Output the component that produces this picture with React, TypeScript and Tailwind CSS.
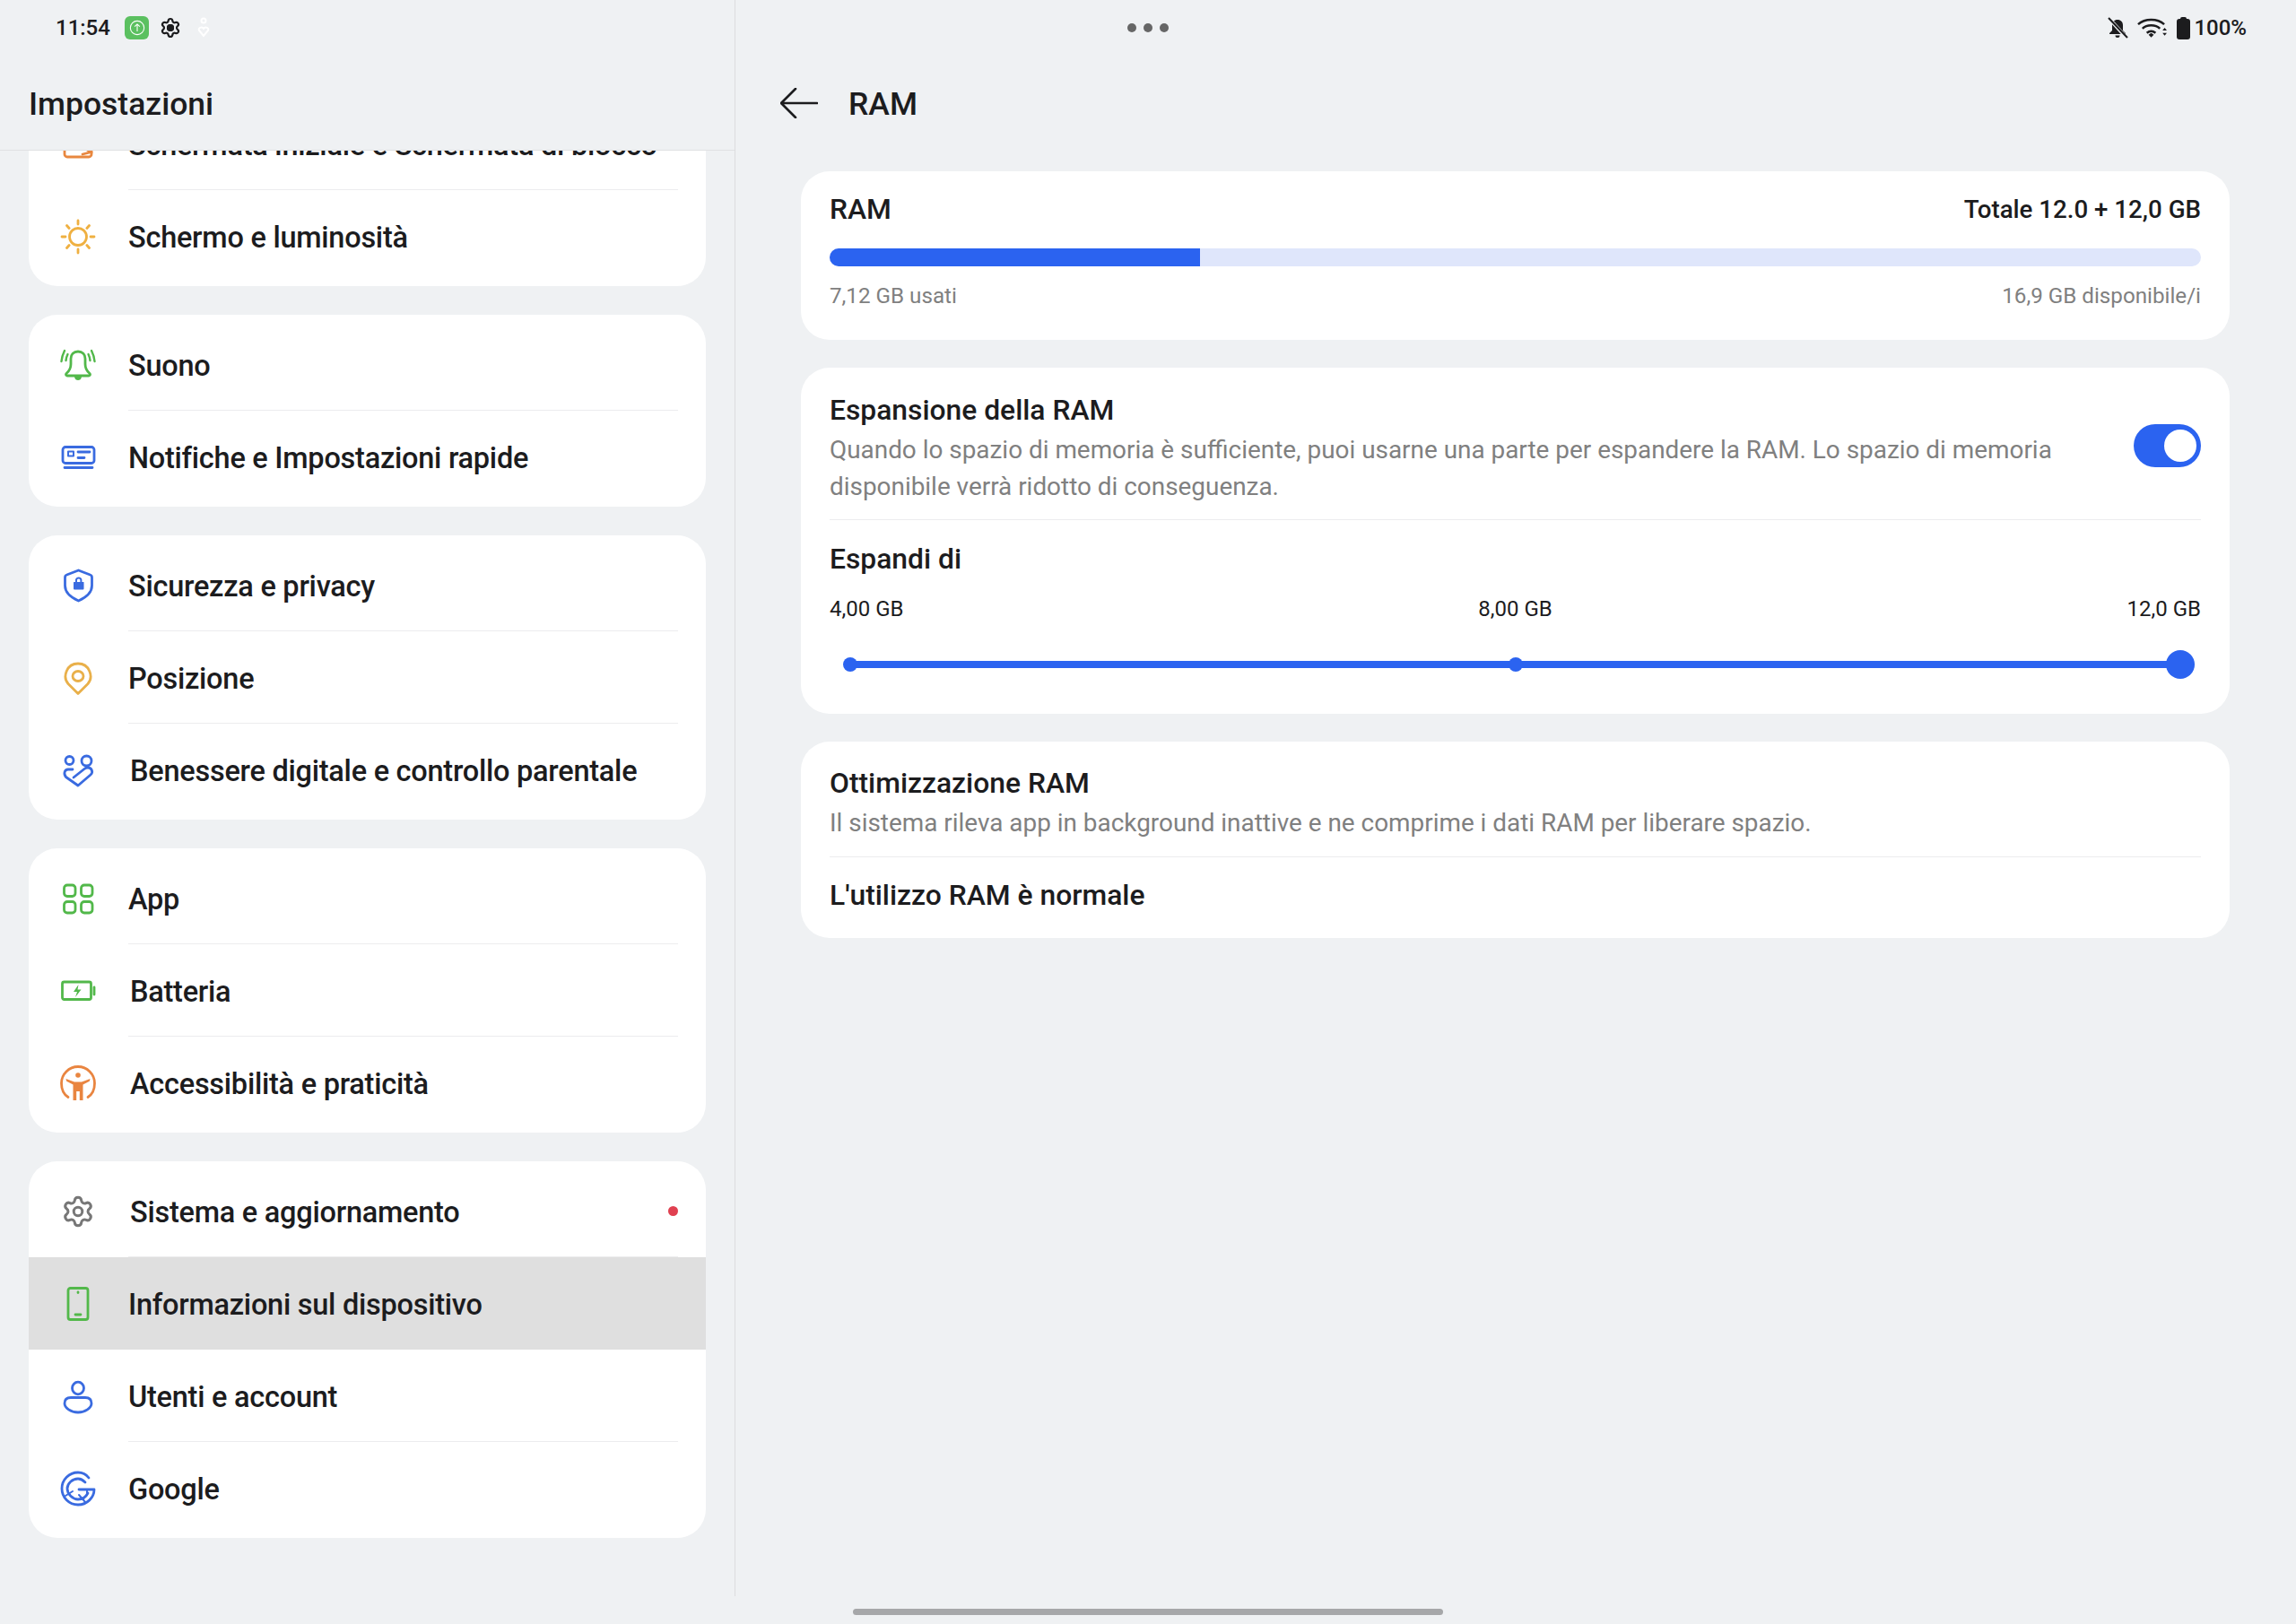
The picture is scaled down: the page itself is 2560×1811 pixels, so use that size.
import React from "react";
import { Settings } from "lucide-react";

const Icon = ({ children, className }: { children: React.ReactNode; className: string }) => (
  <svg viewBox="0 0 40 40" fill="none" stroke="currentColor" strokeWidth="2.8" strokeLinecap="round" strokeLinejoin="round" className={`h-10 w-10 ${className}`}>
    {children}
  </svg>
);

const ScreenIcon = () => (
  <Icon className="text-[#e8873f]">
    <rect x="5" y="6" width="30" height="28" rx="3" />
    <path d="M27 24l8 5M25 31l8-2" />
  </Icon>
);

const SunIcon = () => (
  <Icon className="text-[#efb041]">
    <circle cx="20" cy="20" r="9.500" />
    <path d="M20 2v4M20 34v4M2 20h4M34 20h4M7.500 7.500l2.600 3M32.500 7.500l-2.600 3M7.500 32.500l2.600-3M32.500 32.500l-2.600-3" />
  </Icon>
);

const BellIcon = () => (
  <Icon className="text-[#52b84a]">
    <path d="M20 5c-5 0-8 3.500-8 8v6c0 5-2 8-5 10.500-1 1-.5 2.500 1 2.500h24c1.500 0 2-1.500 1-2.500-3-2.500-5-5.500-5-10.500v-6c0-4.500-3-8-8-8z" />
    <path d="M16 33c.5 3 2 4 4 4s3.500-1 4-4z" fill="currentColor" stroke="none" />
    <path d="M1.500 16c.3-4 1.500-8 3.500-12M6.500 15c.3-2.500 1-5 2-7M38.500 16c-.3-4-1.500-8-3.500-12M33.500 15c-.3-2.500-1-5-2-7" strokeWidth="2.400" />
  </Icon>
);

const NoticeIcon = () => (
  <Icon className="text-[#3a6be0]">
    <rect x="3" y="8.500" width="35" height="18" rx="3" />
    <rect x="9" y="13.500" width="6" height="5" strokeWidth="2" />
    <path d="M20 14h13M20 20.500h7M5 31.500h31" />
  </Icon>
);

const ShieldIcon = () => (
  <Icon className="text-[#3a6be0]">
    <path d="M20.500 3l13 5c1.500.5 2 1.500 2 3v9c0 8-6 13-15 17C11.500 33 5.500 28 5.500 20v-9c0-1.500.5-2.500 2-3z" />
    <path d="M15.500 16h10.500a.5.5 0 01.5.5v7a1 1 0 01-1 1H16a1 1 0 01-1-1v-7a.5.5 0 01.5-.5z" fill="currentColor" stroke="none" />
    <path d="M18 16v-2.500a2.800 2.800 0 015.400 0V16" strokeWidth="2" />
  </Icon>
);

const PinIcon = () => (
  <Icon className="text-[#e9b04a]">
    <path d="M20 37.500L9 26.500C2.500 19 7 4 20 4s17.500 15 11 22.500z" />
    <ellipse cx="20" cy="18" rx="6" ry="5.500" />
  </Icon>
);

const WellbeingIcon = () => (
  <Icon className="text-[#3a6be0]">
    <circle cx="10.500" cy="9" r="4.500" />
    <circle cx="29.500" cy="9.500" r="5.500" />
    <path d="M14 19H9c-4 0-5.500 5-2.500 8.500L20 37l14-12c3.500-3 1-8-3-8-1.500 0-3 .5-4 1.500L15 28" />
  </Icon>
);

const AppsIcon = () => (
  <Icon className="text-[#52b84a]">
    <rect x="4.500" y="5" width="12.500" height="12.500" rx="3.500" />
    <rect x="23.500" y="5" width="12.500" height="12.500" rx="3.500" />
    <rect x="4.500" y="23.500" width="12.500" height="12.500" rx="3.500" />
    <rect x="23.500" y="23.500" width="12.500" height="12.500" rx="3.500" />
  </Icon>
);

const BatteryIcon = () => (
  <Icon className="text-[#52b84a]">
    <rect x="2.500" y="10" width="32" height="19.500" rx="2" />
    <path d="M38 16v8" />
    <path d="M20.500 13l-5.500 8h4l-2 6 6.500-8.500h-4z" fill="currentColor" stroke="none" />
  </Icon>
);

const AccessIcon = () => (
  <Icon className="text-[#e98540]">
    <path d="M9 35.500C3.500 32 1.500 26 1.500 20 1.500 9.800 9.800 1.500 20 1.500S38.500 9.800 38.500 20c0 6-2 12-7.500 15.500" />
    <circle cx="20" cy="11" r="2.800" fill="currentColor" stroke="none" />
    <path d="M6.500 15l9.500 3.500h8l9.500-3.500-.7 2.800-7.300 3.700V39h-3.700V29h-3.600v10H14.500V21.500L7.200 17.800z" fill="currentColor" stroke="none" />
  </Icon>
);

const PhoneIcon = () => (
  <Icon className="text-[#52b84a]">
    <rect x="9" y="2.500" width="22" height="35" rx="2.500" />
    <path d="M17 32h6M20 7v.5" />
  </Icon>
);

const UserIcon = () => (
  <Icon className="text-[#3a6be0]">
    <ellipse cx="20" cy="11" rx="6.500" ry="6.800" />
    <path d="M12 21.500h16c4.500 0 7 2.500 7 6.500 0 5-7 10-15 10S5 33 5 28c0-4 2.500-6.500 7-6.500z" />
  </Icon>
);

const GoogleIcon = () => (
  <Icon className="text-[#3a6be0]">
    <path d="M32 8C29 4 25 2 20 2 10 2 2 10 2 20s8 18 18 18 18-8 18-17H21" />
    <path d="M28 13c-2-2-5-4-8-4C14 9 8 14 8 20c0 6 6 12 12 12 5 0 9-3 11-7" />
    <path d="M6 28l8-5M21 27l7 8M30 21v5" strokeWidth="2" />
  </Icon>
);

type RowData = { icon: React.ReactNode; label: string; shift?: boolean; active?: boolean; dot?: boolean; last?: boolean };

const Row = ({ icon, label, shift, active, dot, last }: RowData) => (
  <div className={`flex h-[103px] pl-[35px] pr-[31px] ${active ? "bg-[#dfdfdf]" : ""}`}>
    <div className="flex w-[76px] shrink-0 items-center">{icon}</div>
    <div className={`flex flex-1 items-center justify-between ${last || active ? "" : "border-b border-[#ececee]"}`}>
      <span className={`block pt-[3px] text-[32.500px] font-[480] leading-10 tracking-[-0.25px] text-[#1c1c1e] ${shift ? "ml-[2px]" : ""}`}>{label}</span>
      {dot && <span className="h-[11px] w-[11px] rounded-full bg-[#e04050]" />}
    </div>
  </div>
);

const Group = ({ rows }: { rows: RowData[] }) => (
  <div className="overflow-hidden rounded-[32px] bg-white py-1">
    {rows.map((r, i) => (
      <Row key={r.label} {...r} last={i === rows.length - 1} />
    ))}
  </div>
);

const groups: RowData[][] = [
  [
    { icon: <BellIcon />, label: "Suono" },
    { icon: <NoticeIcon />, label: "Notifiche e Impostazioni rapide" },
  ],
  [
    { icon: <ShieldIcon />, label: "Sicurezza e privacy" },
    { icon: <PinIcon />, label: "Posizione" },
    { icon: <WellbeingIcon />, label: "Benessere digitale e controllo parentale", shift: true },
  ],
  [
    { icon: <AppsIcon />, label: "App" },
    { icon: <BatteryIcon />, label: "Batteria", shift: true },
    { icon: <AccessIcon />, label: "Accessibilità e praticità", shift: true },
  ],
  [
    { icon: <Settings size={38} strokeWidth={1.9} className="ml-px text-[#777]" />, label: "Sistema e aggiornamento", shift: true, dot: true },
    { icon: <PhoneIcon />, label: "Informazioni sul dispositivo", active: true },
    { icon: <UserIcon />, label: "Utenti e account" },
    { icon: <GoogleIcon />, label: "Google" },
  ],
];

const StatusLeft = () => (
  <div className="flex h-[62px] items-center pl-[62px]">
    <span className="w-[77px] text-[24px] font-medium text-[#1c1c1e]">11:54</span>
    <div className="flex h-[26px] w-[27px] items-center justify-center rounded-[6px] bg-[#5bc060]">
      <svg viewBox="0 0 20 20" fill="none" stroke="#fff" strokeWidth="1.2" className="h-[18px] w-[18px]">
        <circle cx="10" cy="10" r="8.500" />
        <path d="M10 14.500v-9M6.800 8.500L10 5.500l3.200 3" />
      </svg>
    </div>
    <div className="relative ml-3 flex h-[24px] w-[24px] items-center justify-center">
      <Settings size={24} strokeWidth={2.2} className="text-[#1c1c1e]" />
      <span className="absolute h-2 w-2 rounded-full bg-[#1c1c1e]" />
    </div>
    <svg viewBox="0 0 14 24" fill="none" stroke="#fff" strokeWidth="2" className="ml-[18px] h-[24px] w-[14px]">
      <circle cx="7" cy="4" r="2.500" />
      <path d="M7 21L2 15c-1.500-2.500 3-5 5-2 2-3 6.500-.5 5 2z" />
    </svg>
  </div>
);

const StatusRight = () => (
  <div className="relative flex h-[62px] items-center justify-end pr-[55px]">
    <div className="absolute left-[437px] flex gap-2">
      <span className="h-[10px] w-[10px] rounded-full bg-[#666]" />
      <span className="h-[10px] w-[10px] rounded-full bg-[#666]" />
      <span className="h-[10px] w-[10px] rounded-full bg-[#666]" />
    </div>
    <svg viewBox="0 0 24 24" className="h-[24px] w-[24px] text-[#1c1c1e]" fill="currentColor">
      <path d="M12 3c-3.500 0-6 2.500-6 6v6l-3 3v1h18v-1l-3-3V9c0-3.500-2.500-6-6-6zM9.500 20.500h5a2.500 2.500 0 01-5 0z" />
      <path d="M2 1l20 22" stroke="#eff1f3" strokeWidth="4" />
      <path d="M2 1l21 22" stroke="currentColor" strokeWidth="2" />
    </svg>
    <svg viewBox="0 0 34 24" fill="none" stroke="#1c1c1e" strokeWidth="2.600" className="ml-[10px] h-[24px] w-[33px]">
      <path d="M1 8c8-7 22-7 30 0M6 13c5-5 15-5 20 0M11 18c3-2.500 7-2.500 10 0" />
      <path d="M13 20l3-2 3 2-3 3z" fill="#1c1c1e" stroke="none" />
      <path d="M29 15l2.500-3 2.500 3zM29 18l2.500 3 2.500-3z" fill="#1c1c1e" stroke="none" />
    </svg>
    <div className="ml-[11px] flex flex-col items-center">
      <span className="h-[2px] w-[7px] rounded-t-sm bg-[#1c1c1e]" />
      <span className="h-[23px] w-[15px] rounded-[3px] bg-[#1c1c1e]" />
    </div>
    <span className="ml-[4px] text-[24px] font-medium text-[#1c1c1e]">100%</span>
  </div>
);

export default function App() {
  return (
    <div className="relative flex h-[1811px] w-[2560px] overflow-hidden bg-[#eff1f3] font-['Roboto',sans-serif]">
      <div className="flex h-[1780px] w-[820px] shrink-0 flex-col border-r border-[#dcdcde]">
        <div className="h-[168px] shrink-0 border-b border-[#e0e1e3]">
          <StatusLeft />
          <div className="flex h-[105px] items-center pl-[32px] pt-[4px] text-[35.500px] font-[480] text-[#1c1c1e]">Impostazioni</div>
        </div>
        <div className="flex-1 overflow-hidden pl-[32px] pr-[32px]">
          <div className="-mt-[63px] flex flex-col gap-[32px]">
            <Group
              rows={[
                { icon: <ScreenIcon />, label: "Schermata iniziale e Schermata di blocco" },
                { icon: <SunIcon />, label: "Schermo e luminosità" },
              ]}
            />
            {groups.map((rows) => (
              <Group key={rows[0].label} rows={rows} />
            ))}
          </div>
        </div>
      </div>

      <div className="flex-1">
        <StatusRight />
        <div className="flex h-[106px] items-center pl-[50px]">
          <svg viewBox="0 0 42 34" fill="none" stroke="#1c1c1e" strokeWidth="2.600" strokeLinecap="round" strokeLinejoin="round" className="h-[34px] w-[42px]">
            <path d="M17 1L1 17l16 16M1 17h40" />
          </svg>
          <span className="ml-[34px] pt-[4px] text-[35.500px] font-[480] text-[#1c1c1e]">RAM</span>
        </div>
        <div className="mt-[23px] flex flex-col gap-[31px] pl-[73px] pr-[74px]">
          <section className="rounded-[32px] bg-white px-[32px] pb-[33px] pt-[23px]">
            <div className="flex h-10 items-center justify-between font-[480] text-[#1c1c1e]">
              <span className="text-[31.800px]">RAM</span>
              <span className="text-[27.700px]">Totale 12.0 + 12,0 GB</span>
            </div>
            <div className="mt-[23px] h-5 overflow-hidden rounded-full bg-[#dfe6fb]">
              <div className="h-full bg-[#2b63f0]" style={{ width: "27%" }} />
            </div>
            <div className="mt-[17px] flex h-8 items-center justify-between text-[24.200px] text-[#808080]">
              <span>7,12 GB usati</span>
              <span>16,9 GB disponibile/i</span>
            </div>
          </section>

          <section className="rounded-[32px] bg-white px-[32px] pb-[39px] pt-[27px]">
            <div className="flex items-start justify-between border-b border-[#ececee] pb-[16px]">
              <div>
                <div className="text-[31.800px] font-[480] leading-10 text-[#1c1c1e]">Espansione della RAM</div>
                <p className="mt-[4px] w-[1420px] text-[27.900px] leading-[41px] text-[#808080]">
                  Quando lo spazio di memoria è sufficiente, puoi usarne una parte per espandere la RAM. Lo spazio di memoria disponibile verrà ridotto di conseguenza.
                </p>
              </div>
              <div className="mt-[36px] flex h-[48px] w-[75px] items-center justify-end rounded-full bg-[#2b63f0] pr-[5px]">
                <span className="h-[36px] w-[36px] rounded-full bg-white" />
              </div>
            </div>
            <div className="mt-[23px] text-[31.800px] font-[480] leading-10 text-[#1c1c1e]">Espandi di</div>
            <div className="mt-[20px] flex h-8 items-center justify-between text-[24px] text-[#1c1c1e]">
              <span>4,00 GB</span>
              <span>8,00 GB</span>
              <span>12,0 GB</span>
            </div>
            <div className="mx-[23px] mt-[30px] flex h-8 items-center">
              <div className="flex h-2 flex-1 items-center justify-between bg-[#2b63f0]">
                <span className="flex w-0 justify-center"><span className="h-4 w-4 shrink-0 rounded-full bg-[#2b63f0]" /></span>
                <span className="flex w-0 justify-center"><span className="h-4 w-4 shrink-0 rounded-full bg-[#2b63f0]" /></span>
                <span className="flex w-0 justify-center"><span className="h-8 w-8 shrink-0 rounded-full bg-[#2b63f0]" /></span>
              </div>
            </div>
          </section>

          <section className="rounded-[32px] bg-white px-[32px] pb-[28px] pt-[26px]">
            <div className="border-b border-[#ececee] pb-[17px]">
              <div className="text-[31.800px] font-[480] leading-10 text-[#1c1c1e]">Ottimizzazione RAM</div>
              <p className="mt-[4px] text-[27.900px] leading-[41px] text-[#808080]">
                Il sistema rileva app in background inattive e ne comprime i dati RAM per liberare spazio.
              </p>
            </div>
            <div className="mt-[22px] text-[31.800px] font-[480] leading-10 text-[#1c1c1e]">L'utilizzo RAM è normale</div>
          </section>
        </div>
      </div>

      <div className="absolute bottom-[10px] left-[951px] h-[7px] w-[658px] rounded-full bg-[#a6a7a9]" />
    </div>
  );
}
